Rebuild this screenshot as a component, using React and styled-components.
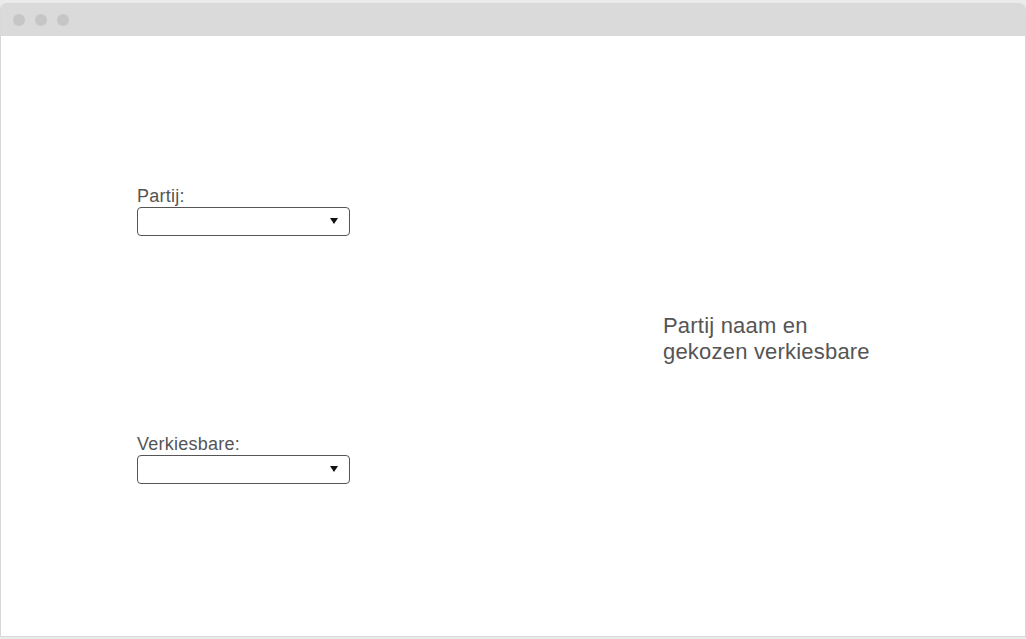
import React from 'react';
import styled, { createGlobalStyle } from 'styled-components';

const GlobalStyle = createGlobalStyle`
    html, body {
        margin: 0;
        padding: 0;
        background: #ebebeb;
    }
    body {
        font-family: "Liberation Sans", Arial, sans-serif;
    }
`;

const Window = styled.div`
    box-sizing: border-box;
    width: 1026px;
    height: 634px;
    margin-top: 3px;
    background: #fff;
    border: 1px solid #d8d8d8;
    border-top: none;
    border-radius: 6px 6px 0 0;
    overflow: hidden;
    display: flex;
    flex-direction: column;
`;

const TitleBar = styled.div`
    height: 33px;
    background: #dadada;
    display: flex;
    align-items: center;
    gap: 10px;
    padding-left: 12px;
    flex-shrink: 0;
`;

const Dot = styled.span`
    width: 12px;
    height: 12px;
    border-radius: 50%;
    background: #c6c6c6;
`;

const Content = styled.div`
    flex: 1;
    display: grid;
    grid-template-columns: 662px 1fr;
`;

const FormColumn = styled.div`
    padding: 150px 0 0 136px;
    display: flex;
    flex-direction: column;
    gap: 198px;
`;

const Field = styled.div`
    display: flex;
    flex-direction: column;
    gap: 1px;
`;

const Label = styled.label`
    font-size: 18px;
    line-height: 20px;
    letter-spacing: 0.25px;
    color: #555;
`;

const SelectWrap = styled.div`
    position: relative;
    width: 213px;

    &::after {
        content: '';
        position: absolute;
        right: 12px;
        top: 11px;
        border-left: 4px solid transparent;
        border-right: 4px solid transparent;
        border-top: 6px solid #111;
        pointer-events: none;
    }
`;

const Select = styled.select`
    appearance: none;
    box-sizing: border-box;
    width: 100%;
    height: 29px;
    border: 1px solid #555;
    border-radius: 4px;
    background: #fff;
    font-family: inherit;
    font-size: 14px;
    padding: 0 24px 0 6px;
`;

const Summary = styled.div`
    padding-top: 277px;
    font-size: 22px;
    line-height: 26px;
    letter-spacing: 0.2px;
    color: #555;
`;

function App() {
    return (
        <>
            <GlobalStyle />
            <Window>
                <TitleBar>
                    <Dot />
                    <Dot />
                    <Dot />
                </TitleBar>
                <Content>
                    <FormColumn>
                        <Field>
                            <Label htmlFor="partij">Partij:</Label>
                            <SelectWrap>
                                <Select id="partij" defaultValue="">
                                    <option value=""></option>
                                </Select>
                            </SelectWrap>
                        </Field>
                        <Field>
                            <Label htmlFor="verkiesbare">Verkiesbare:</Label>
                            <SelectWrap>
                                <Select id="verkiesbare" defaultValue="">
                                    <option value=""></option>
                                </Select>
                            </SelectWrap>
                        </Field>
                    </FormColumn>
                    <Summary>
                        Partij naam en
                        <br />
                        gekozen verkiesbare
                    </Summary>
                </Content>
            </Window>
        </>
    );
}

export default App;
